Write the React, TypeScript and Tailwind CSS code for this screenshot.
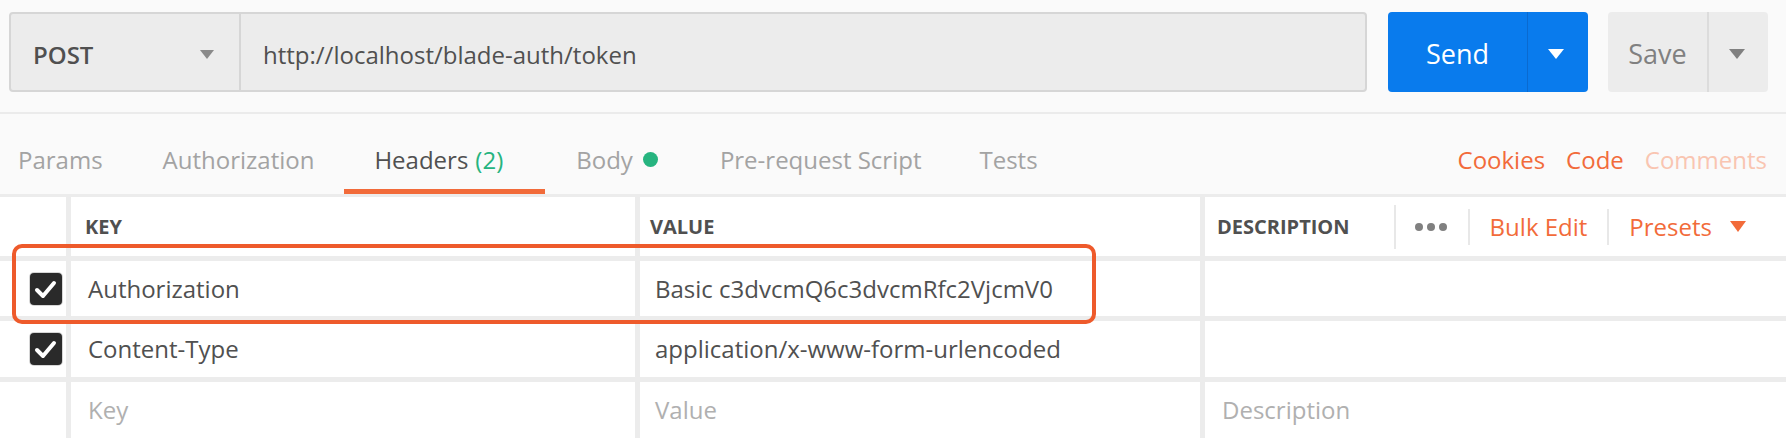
import { ReactNode } from "react";

type Tab = {
  label: string;
  count?: number;
  dot?: boolean;
  active?: boolean;
  pad: string;
};

type HeaderRow = {
  key: string;
  value: string;
  enabled: boolean;
};

const tabs: Tab[] = [
  { label: "Params", pad: "pl-[18px] pr-[30px]" },
  { label: "Authorization", pad: "pl-[30px] pr-[30px]" },
  { label: "Headers", count: 2, active: true, pad: "pl-[30px] pr-[42px]" },
  { label: "Body", dot: true, pad: "pl-[31px] pr-[31px]" },
  { label: "Pre-request Script", pad: "pl-[31px] pr-[29px]" },
  { label: "Tests", pad: "pl-[29px] pr-[31px]" },
];

const rows: HeaderRow[] = [
  { key: "Authorization", value: "Basic c3dvcmQ6c3dvcmRfc2VjcmV0", enabled: true },
  { key: "Content-Type", value: "application/x-www-form-urlencoded", enabled: true },
];

const Caret = ({ color, w = 14, h = 9 }: { color: string; w?: number; h?: number }) => (
  <svg width={w} height={h} viewBox={`0 0 ${w} ${h}`}>
    <polygon points={`0,0 ${w},0 ${w / 2},${h}`} fill={color} />
  </svg>
);

const CheckBox = () => (
  <div className="flex h-[32px] w-[32px] items-center justify-center rounded-[4px] bg-[#2a2a2a] shadow-[0_0_0_1px_#d6d6d6]">
    <svg width="32" height="32" viewBox="0 0 32 32">
      <polyline
        points="7,17 13,23 24,10"
        fill="none"
        stroke="#fff"
        strokeWidth="4"
        strokeLinecap="round"
        strokeLinejoin="round"
      />
    </svg>
  </div>
);

const Cell = ({ children, className = "" }: { children?: ReactNode; className?: string }) => (
  <div className={`flex items-center bg-white ${className}`}>{children}</div>
);

const Divider = ({ h = "h-[36px]" }: { h?: string }) => (
  <div className={`w-[2px] ${h} bg-[#e8e8e8]`} />
);

export default function App() {
  return (
    <div className="relative h-[438px] w-[1786px] overflow-hidden bg-white font-['Open_Sans',sans-serif]">
      {/* request bar */}
      <div className="flex h-[114px] items-start border-b-2 border-[#ebebeb] bg-[#fafafa] pl-[9px] pt-[12px]">
        <div className="flex h-[80px] w-[1358px] rounded-[4px] border-2 border-[#d6d6d6] bg-[#ececec]">
          <div className="flex w-[230px] items-center justify-between border-r-2 border-[#d6d6d6] pl-[22px] pr-[25px] pt-[5px]">
            <span className="text-[24px] font-semibold text-[#505050]">POST</span>
            <Caret color="#8a8a8a" w={14} h={9} />
          </div>
          <div className="flex items-center pl-[22px] pt-[5px] text-[24px] text-[#505050]">
            http://localhost/blade-auth/token
          </div>
        </div>

        <div className="ml-[21px] flex h-[80px] w-[200px] rounded-[4px] bg-[#097bed] text-white">
          <div className="flex w-[139px] items-center justify-center pt-[5px] text-[27px] font-medium">
            Send
          </div>
          <div className="w-[1px] bg-[#0a6ad0]" />
          <div className="flex flex-1 items-center justify-center pr-[4px] pt-[4px]">
            <Caret color="#ffffff" w={16} h={10} />
          </div>
        </div>

        <div className="ml-[20px] flex h-[80px] w-[160px] rounded-[4px] bg-[#ececec]">
          <div className="flex w-[99px] items-center justify-center pt-[5px] text-[27px] text-[#808080]">
            Save
          </div>
          <div className="w-[2px] bg-[#dcdcdc]" />
          <div className="flex flex-1 items-center justify-center pr-[4px] pt-[4px]">
            <Caret color="#808080" w={16} h={10} />
          </div>
        </div>
      </div>

      {/* tabs */}
      <div className="flex h-[83px] items-center border-b-[3px] border-[#ececec] bg-[#fafafa] text-[24px]">
        {tabs.map((tab) => (
          <div
            key={tab.label}
            className={`relative flex h-full items-center pt-[11px] ${tab.pad} ${
              tab.active ? "text-[#505050]" : "text-[#a3a3a3]"
            }`}
          >
            <span>{tab.label}</span>
            {tab.count ? <span className="ml-[7px] text-[#26b47f]">({tab.count})</span> : null}
            {tab.dot ? <span className="ml-[10px] h-[15px] w-[15px] rounded-full bg-[#26b47f]" /> : null}
            {tab.active ? <div className="absolute bottom-0 left-0 right-0 h-[5px] bg-[#f26b3a]" /> : null}
          </div>
        ))}
        <div className="ml-auto flex items-center gap-[21px] pr-[19px] pt-[11px]">
          <span className="text-[#f26b3a]">Cookies</span>
          <span className="text-[#f26b3a]">Code</span>
          <span className="text-[#f9c5b1]">Comments</span>
        </div>
      </div>

      {/* headers table */}
      <div className="grid grid-cols-[66px_564px_560px_1fr] grid-rows-[59px_55px_56px_56px] gap-[5px] bg-[#ececec]">
        <Cell />
        <Cell className="pl-[14px] text-[20px] font-bold text-[#505050]">KEY</Cell>
        <Cell className="pl-[10px] text-[20px] font-bold text-[#505050]">VALUE</Cell>
        <Cell className="pl-[12px]">
          <span className="text-[20px] font-bold text-[#505050]">DESCRIPTION</span>
          <div className="ml-auto flex items-center pr-[40px]">
            <Divider h="h-[44px]" />
            <div className="ml-[19px] flex gap-[4px]">
              <span className="h-[8px] w-[8px] rounded-full bg-[#808080]" />
              <span className="h-[8px] w-[8px] rounded-full bg-[#808080]" />
              <span className="h-[8px] w-[8px] rounded-full bg-[#808080]" />
            </div>
            <div className="ml-[21px]">
              <Divider />
            </div>
            <span className="ml-[20px] text-[24px] text-[#f26b3a]">Bulk Edit</span>
            <div className="ml-[20px]">
              <Divider />
            </div>
            <span className="ml-[20px] text-[24px] text-[#f26b3a]">Presets</span>
            <div className="ml-[18px]">
              <Caret color="#f26b3a" w={16} h={11} />
            </div>
          </div>
        </Cell>

        {rows.map((row) => (
          <div key={row.key} className="contents">
            <Cell className="pl-[30px]">{row.enabled ? <CheckBox /> : null}</Cell>
            <Cell className="pl-[17px] text-[24px] text-[#505050]">{row.key}</Cell>
            <Cell className="pl-[15px] text-[24px] text-[#505050]">{row.value}</Cell>
            <Cell />
          </div>
        ))}

        <Cell />
        <Cell className="pl-[17px] text-[24px] text-[#b0b0b0]">Key</Cell>
        <Cell className="pl-[15px] text-[24px] text-[#b0b0b0]">Value</Cell>
        <Cell className="pl-[17px] text-[24px] text-[#b0b0b0]">Description</Cell>
      </div>

      {/* highlight around the Authorization header */}
      <div className="absolute left-[12px] top-[244px] h-[80px] w-[1084px] rounded-[10px] border-[4px] border-[#ee5a2b]" />
    </div>
  );
}
